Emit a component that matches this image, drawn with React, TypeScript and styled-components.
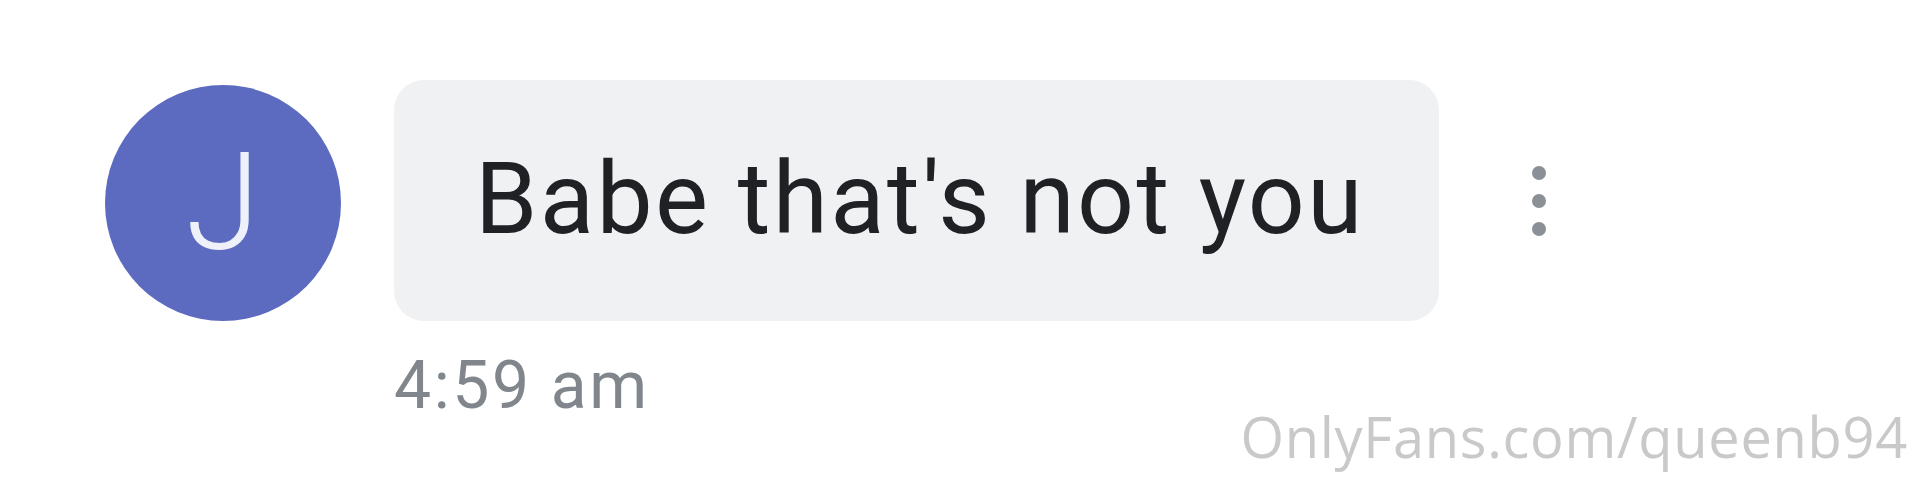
import styled, { createGlobalStyle } from 'styled-components';

const GlobalStyle = createGlobalStyle`
  html, body {
    margin: 0;
    padding: 0;
    background: #ffffff;
  }
  body {
    font-family: Roboto, "Noto Sans", Arial, sans-serif;
  }
`;

const Page = styled.div`
  position: relative;
  width: 1920px;
  height: 484px;
  box-sizing: border-box;
  padding: 80px 0 0 105px;
  overflow: hidden;
`;

const Message = styled.div`
  display: grid;
  grid-template-columns: 236px auto auto;
  column-gap: 53px;
  align-items: center;
  justify-content: start;
`;

const Avatar = styled.div`
  width: 236px;
  height: 236px;
  margin-top: 4px;
  border-radius: 50%;
  background: #5c6bc0;
  color: #eef0fa;
  display: flex;
  align-items: center;
  justify-content: center;
  font-family: Roboto, sans-serif;
  font-weight: 300;
  font-size: 136px;
  line-height: 1;
`;

const Bubble = styled.div`
  height: 241px;
  box-sizing: border-box;
  padding: 0 74px 4px 81px;
  display: flex;
  align-items: center;
  background: #f0f1f3;
  border-radius: 30px;
  color: #202124;
  font-size: 100px;
  letter-spacing: 2.4px;
  white-space: nowrap;
`;

const Menu = styled.button`
  display: flex;
  flex-direction: column;
  gap: 14px;
  margin-left: 40px;
  padding: 0;
  border: none;
  background: none;
`;

const Dot = styled.span`
  width: 14px;
  height: 14px;
  border-radius: 50%;
  background: #8b9097;
`;

const Time = styled.div`
  grid-column: 2;
  margin-top: 32px;
  color: #80868b;
  font-size: 66px;
  letter-spacing: 2.6px;
  line-height: 1;
`;

const Watermark = styled.div`
  position: absolute;
  right: 12px;
  bottom: 10px;
  font-family: "Open Sans", "Noto Sans", sans-serif;
  font-size: 56px;
  color: #c9c9c9;
  letter-spacing: 0.7px;
`;

export default function App() {
  return (
    <>
      <GlobalStyle />
      <Page>
        <Message>
          <Avatar>J</Avatar>
          <Bubble>Babe that's not you</Bubble>
          <Menu aria-label="More">
            <Dot />
            <Dot />
            <Dot />
          </Menu>
          <Time>4:59 am</Time>
        </Message>
        <Watermark>OnlyFans.com/queenb94</Watermark>
      </Page>
    </>
  );
}
